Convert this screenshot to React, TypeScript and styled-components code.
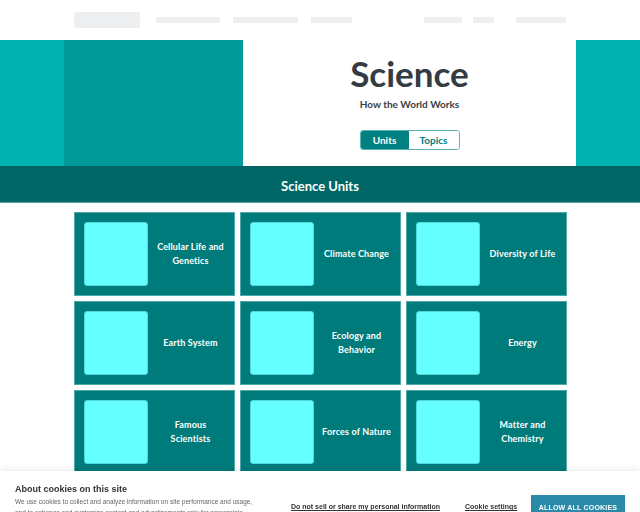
import React from 'react';
import styled, { createGlobalStyle } from 'styled-components';

const GlobalStyle = createGlobalStyle`
  html, body { margin: 0; padding: 0; background: #fff; }
  body { font-family: Lato, "Open Sans", sans-serif; }
  * { box-sizing: border-box; }
`;

const Page = styled.div`
  width: 640px;
  min-height: 512px;
`;

const Header = styled.header`
  height: 40px;
  display: flex;
  align-items: center;
  padding: 0 74px;
`;

const LogoBlock = styled.div`
  width: 68px;
  height: 16px;
  background: #eeeff0;
`;

const NavGroup = styled.nav<{ $gap: number; $offset: number }>`
  display: flex;
  gap: ${({ $gap }) => $gap}px;
  margin-left: ${({ $offset }) => $offset}px;
`;

const NavBar = styled.div<{ $w: number; $ml?: number }>`
  width: ${({ $w }) => $w}px;
  height: 6px;
  background: #eeeff0;
  margin-left: ${({ $ml }) => $ml ?? 0}px;
`;

const Hero = styled.section`
  display: grid;
  grid-template-columns: 64px 179px 1fr 64px;
  height: 127px;
  border-bottom: 1px solid #00605f;
`;

const Strip = styled.div<{ $color: string }>`
  background: ${({ $color }) => $color};
`;

const HeroCenter = styled.div`
  background: #fff;
  display: flex;
  flex-direction: column;
  align-items: center;
  padding-top: 13px;
`;

const Title = styled.h1`
  margin: 0;
  font-size: 35px;
  font-weight: 700;
  color: #343b42;
  line-height: 40px;
`;

const Subtitle = styled.p`
  margin: 5px 0 0;
  font-size: 10px;
  line-height: 12px;
  font-weight: 700;
  color: #3a3f44;
`;

const Toggle = styled.div`
  display: flex;
  margin-top: 20px;
  border: 1.5px solid #5fb3b3;
  border-radius: 3px;
  overflow: hidden;
  height: 20px;
`;

const ToggleOption = styled.button<{ $active?: boolean }>`
  font-family: inherit;
  font-size: 10px;
  font-weight: 700;
  border: none;
  padding: 0;
  width: ${({ $active }) => ($active ? 48 : 50)}px;
  background: ${({ $active }) => ($active ? '#008080' : '#fff')};
  color: ${({ $active }) => ($active ? '#fff' : '#008080')};
`;

const Band = styled.div`
  height: 36px;
  background: #006666;
  color: #fff;
  display: flex;
  align-items: center;
  justify-content: center;
  font-size: 13px;
  font-weight: 700;
  padding-top: 2px;
  border-bottom: 1px solid #5aa6a6;
`;

const Grid = styled.div`
  display: grid;
  grid-template-columns: repeat(3, 161px);
  column-gap: 5px;
  row-gap: 5px;
  width: 493px;
  margin: 9px auto 0;
`;

const Card = styled.a`
  height: 84px;
  background: #007b7b;
  border: 1px solid #4fa9a9;
  display: flex;
  align-items: center;
  padding-left: 9px;
  text-decoration: none;
`;

const Thumb = styled.div`
  width: 64px;
  height: 64px;
  flex: none;
  background: #66ffff;
  border: 1px solid #4fd8d8;
  border-radius: 3px;
`;

const CardLabel = styled.span`
  flex: 1;
  text-align: center;
  color: #fff;
  font-size: 9px;
  font-weight: 700;
  line-height: 14px;
  letter-spacing: 0.15px;
  padding: 0 8px;
`;

const Cookie = styled.div`
  position: fixed;
  left: 0;
  right: 0;
  bottom: 0;
  height: 41px;
  background: #fff;
  box-shadow: 0 -2px 6px rgba(0, 0, 0, 0.08);
  display: flex;
  font-family: "Liberation Sans", Arial, sans-serif;
  overflow: hidden;
`;

const CookieText = styled.div`
  width: 262px;
  padding: 12px 0 0 15px;
  flex: none;
`;

const CookieTitle = styled.div`
  font-size: 9px;
  font-weight: 700;
  color: #333;
  line-height: 12px;
`;

const CookieBody = styled.div`
  font-size: 6.5px;
  color: #666;
  line-height: 11px;
  margin-top: 1px;
`;

const CookieActions = styled.div`
  flex: 1;
  display: flex;
  align-items: flex-start;
  padding-top: 24px;
  padding-left: 29px;
`;

const CookieLink = styled.a<{ $ml: number }>`
  font-size: 7px;
  font-weight: 700;
  color: #333;
  text-decoration: underline;
  margin-left: ${({ $ml }) => $ml}px;
  margin-top: 8px;
  white-space: nowrap;
`;

const AcceptButton = styled.button`
  margin-left: auto;
  margin-right: 15px;
  width: 94px;
  height: 24px;
  flex: none;
  border: none;
  background: #2a8aa8;
  color: #fff;
  font-family: inherit;
  font-size: 7px;
  font-weight: 700;
  letter-spacing: 0.2px;
  padding: 0;
`;

const units = [
  'Cellular Life and Genetics',
  'Climate Change',
  'Diversity of Life',
  'Earth System',
  'Ecology and Behavior',
  'Energy',
  'Famous Scientists',
  'Forces of Nature',
  'Matter and Chemistry',
];

export default function App() {
  return (
    <Page>
      <GlobalStyle />
      <Header>
        <LogoBlock />
        <NavGroup $gap={13} $offset={16}>
          <NavBar $w={64} />
          <NavBar $w={65} />
          <NavBar $w={41} />
        </NavGroup>
        <NavGroup $gap={11} $offset={72}>
          <NavBar $w={38} />
          <NavBar $w={21} />
          <NavBar $w={50} $ml={11} />
        </NavGroup>
      </Header>
      <Hero>
        <Strip $color="#00b3b3" />
        <Strip $color="#009999" />
        <HeroCenter>
          <Title>Science</Title>
          <Subtitle>How the World Works</Subtitle>
          <Toggle>
            <ToggleOption $active>Units</ToggleOption>
            <ToggleOption>Topics</ToggleOption>
          </Toggle>
        </HeroCenter>
        <Strip $color="#00b3b3" />
      </Hero>
      <Band>Science Units</Band>
      <Grid>
        {units.map((name) => (
          <Card key={name} href="#">
            <Thumb />
            <CardLabel>{name}</CardLabel>
          </Card>
        ))}
      </Grid>
      <Cookie>
        <CookieText>
          <CookieTitle>About cookies on this site</CookieTitle>
          <CookieBody>
            We use cookies to collect and analyze information on site performance and usage,
            and to enhance and customize content and advertisements only for appropriate
          </CookieBody>
        </CookieText>
        <CookieActions>
          <CookieLink $ml={0} href="#">Do not sell or share my personal information</CookieLink>
          <CookieLink $ml={25} href="#">Cookie settings</CookieLink>
          <AcceptButton>ALLOW ALL COOKIES</AcceptButton>
        </CookieActions>
      </Cookie>
    </Page>
  );
}
